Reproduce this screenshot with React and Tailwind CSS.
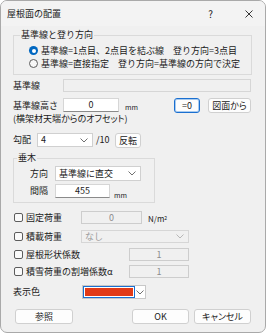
import React from 'react';

const font = { fontFamily: '"Noto Sans CJK JP", "Noto Sans", sans-serif' };

function Chevron({ color = '#606060' }) {
  return (
    <svg width="8" height="5" viewBox="0 0 8 5" className="shrink-0">
      <path d="M0.5 0.5 L4 4 L7.5 0.5" fill="none" stroke={color} strokeWidth="0.9" />
    </svg>
  );
}

function Radio({ checked }) {
  if (checked) {
    return (
      <span className="w-[9px] h-[9px] rounded-full bg-[#0067c0] flex items-center justify-center shrink-0">
        <span className="w-[4px] h-[4px] rounded-full bg-white" />
      </span>
    );
  }
  return <span className="w-[9px] h-[9px] rounded-full border border-[#5c5c5c] bg-[#f7f7f7] shrink-0" />;
}

function Check() {
  return <span className="w-[9px] h-[9px] rounded-[2px] border border-[#5c5c5c] bg-[#fafafa] shrink-0 ml-[1px]" />;
}

function Field({ className, value, disabled }) {
  return (
    <div
      className={`${className} border flex justify-center leading-[10px] pt-[1px] ${
        disabled ? 'bg-[#f0f0f0] border-[#cdcdcd] text-[#8c8c8c]' : 'bg-white border-[#d6d6d6] border-b-[#8a8a8a] text-[#1a1a1a]'
      }`}
    >
      {value}
    </div>
  );
}

function Combo({ className, value, disabled }) {
  return (
    <div
      className={`${className} border flex items-center justify-between pl-[3px] pr-[4px] ${
        disabled ? 'bg-[#f0f0f0] border-[#d6d6d6] text-[#9a9a9a]' : 'bg-white border-[#d0d0d0] text-[#1a1a1a]'
      }`}
    >
      <span className="leading-[10px]">{value}</span>
      <Chevron color={disabled ? '#b0b0b0' : '#606060'} />
    </div>
  );
}

function Btn({ className, children }) {
  return (
    <div className={`${className} border border-[#d0d0d0] rounded-[3px] bg-[#fdfdfd] flex items-center justify-center leading-[10px] text-[#1a1a1a] [font-feature-settings:'palt']`}>
      {children}
    </div>
  );
}

export default function App() {
  return (
    <div className="w-[266px] h-[333px] overflow-hidden rounded-[7px] border border-[#a9a9a9] bg-[#f0f0f0] text-[9px] text-[#1a1a1a] flex flex-col" style={font}>
      <div className="h-[25px] shrink-0 bg-[#f3f3f3] flex items-center pl-[6px]">
        <span className="leading-[10px]">屋根面の配置</span>
        <span className="ml-auto mr-[32px] text-[10px] leading-[10px]">?</span>
        <svg width="8" height="8" viewBox="0 0 8 8" className="mr-[12px]">
          <path d="M0.5 0.5 L7.5 7.5 M7.5 0.5 L0.5 7.5" stroke="#202020" strokeWidth="0.9" />
        </svg>
      </div>

      <div className="pl-[12px] pr-[13px] flex flex-col">
        <div className="relative mt-[9px] h-[40px] border border-[#dadada] pt-[8px] pl-[15px]">
          <span className="absolute -top-[6px] left-[6px] bg-[#f0f0f0] px-[1px] leading-[10px]">基準線と登り方向</span>
          <div className="h-[13px] flex items-center gap-[3px]">
            <Radio checked />
            <span className="leading-[10px]">基準線=1点目、2点目を結ぶ線　登り方向=3点目</span>
          </div>
          <div className="h-[13px] flex items-center gap-[3px]">
            <Radio />
            <span className="leading-[10px]">基準線=直接指定　登り方向=基準線の方向で決定</span>
          </div>
        </div>

        <div className="mt-[4px] h-[13px] flex items-center">
          <span className="w-[50px] leading-[10px]">基準線</span>
          <div className="w-[188px] h-[13px] border border-[#d6d6d6] bg-[#f0f0f0]" />
        </div>

        <div className="mt-[6px] h-[15px] flex items-start">
          <span className="w-[50px] leading-[10px] mt-[3px]">基準線高さ</span>
          <Field className="w-[56px] h-[14px]" value="0" />
          <span className="ml-[6px] mt-[6px] text-[7px] leading-[7px]">mm</span>
          <div className="ml-auto flex gap-[8px] mr-[1px]">
            <div className="w-[26px] h-[15px] border border-[#1a6fd0] rounded-[3px] bg-[#fdfdfd] shadow-[inset_0_0_0_1px_#a9cbef] flex items-center justify-center leading-[10px]">=0</div>
            <Btn className="w-[43px] h-[15px]">図面から</Btn>
          </div>
        </div>

        <div className="h-[12px] flex items-center">
          <span className="leading-[10px] [font-feature-settings:'palt']">(横架材天端からのオフセット)</span>
        </div>

        <div className="mt-[8px] h-[15px] flex items-start">
          <span className="w-[24px] leading-[10px] mt-[2px]">勾配</span>
          <Combo className="w-[56px] h-[14px]" value="4" />
          <span className="w-[22px] pl-[3px] leading-[10px] mt-[2px]">/10</span>
          <Btn className="w-[26px] h-[15px]">反転</Btn>
        </div>

        <div className="relative mt-[10px] w-[142px] h-[45px] border border-[#dadada] pt-[7px] pl-[16px]">
          <span className="absolute -top-[6px] left-[3px] bg-[#f0f0f0] px-[1px] leading-[10px]">垂木</span>
          <div className="h-[15px] flex items-center">
            <span className="w-[25px] leading-[10px]">方向</span>
            <Combo className="w-[86px] h-[15px]" value="基準線に直交" />
          </div>
          <div className="mt-[3px] h-[14px] flex items-start">
            <span className="w-[25px] leading-[10px] mt-[2px]">間隔</span>
            <Field className="w-[55px] h-[14px]" value="455" />
            <span className="ml-[4px] mt-[7px] text-[7px] leading-[8px]">mm</span>
          </div>
        </div>

        <div className="mt-[8px] h-[13px] flex items-center">
          <div className="w-[68px] flex items-center gap-[3px]">
            <Check />
            <span className="leading-[10px]">固定荷重</span>
          </div>
          <Field className="w-[61px] h-[13px] self-start" value="0" disabled />
          <span className="ml-[6px] mt-[3px] text-[8px] leading-[10px]">
            N/m<sup className="text-[5px]">2</sup>
          </span>
        </div>

        <div className="mt-[6px] h-[13px] flex items-center">
          <div className="w-[68px] flex items-center gap-[3px]">
            <Check />
            <span className="leading-[10px]">積載荷重</span>
          </div>
          <Combo className="w-[108px] h-[13px]" value="なし" disabled />
        </div>

        <div className="mt-[5px] h-[13px] flex items-center">
          <div className="w-[116px] flex items-center gap-[3px]">
            <Check />
            <span className="leading-[10px]">屋根形状係数</span>
          </div>
          <Field className="w-[60px] h-[13px] self-start" value="1" disabled />
        </div>

        <div className="mt-[4px] h-[13px] flex items-center">
          <div className="w-[116px] flex items-center gap-[3px]">
            <Check />
            <span className="leading-[10px]">積雪荷重の割増係数α</span>
          </div>
          <Field className="w-[60px] h-[13px] self-start" value="1" disabled />
        </div>

        <div className="mt-[7px] h-[14px] flex items-center">
          <span className="w-[69px] leading-[10px]">表示色</span>
          <div className="w-[64px] h-[14px] flex border border-[#c8c8c8] bg-white">
            <div className="w-[52px] h-full border border-[#1a6fd0] p-[1px] bg-white">
              <div className="w-full h-full bg-[#e23a17]" />
            </div>
            <div className="flex-1 flex items-center justify-center">
              <Chevron />
            </div>
          </div>
        </div>

        <div className="mt-[10px] h-[15px] flex items-center">
          <Btn className="ml-[2px] w-[58px] h-[15px]">参照</Btn>
          <Btn className="ml-auto w-[57px] h-[15px]">OK</Btn>
          <Btn className="ml-[5px] mr-[1px] w-[57px] h-[15px]">キャンセル</Btn>
        </div>
      </div>
    </div>
  );
}
